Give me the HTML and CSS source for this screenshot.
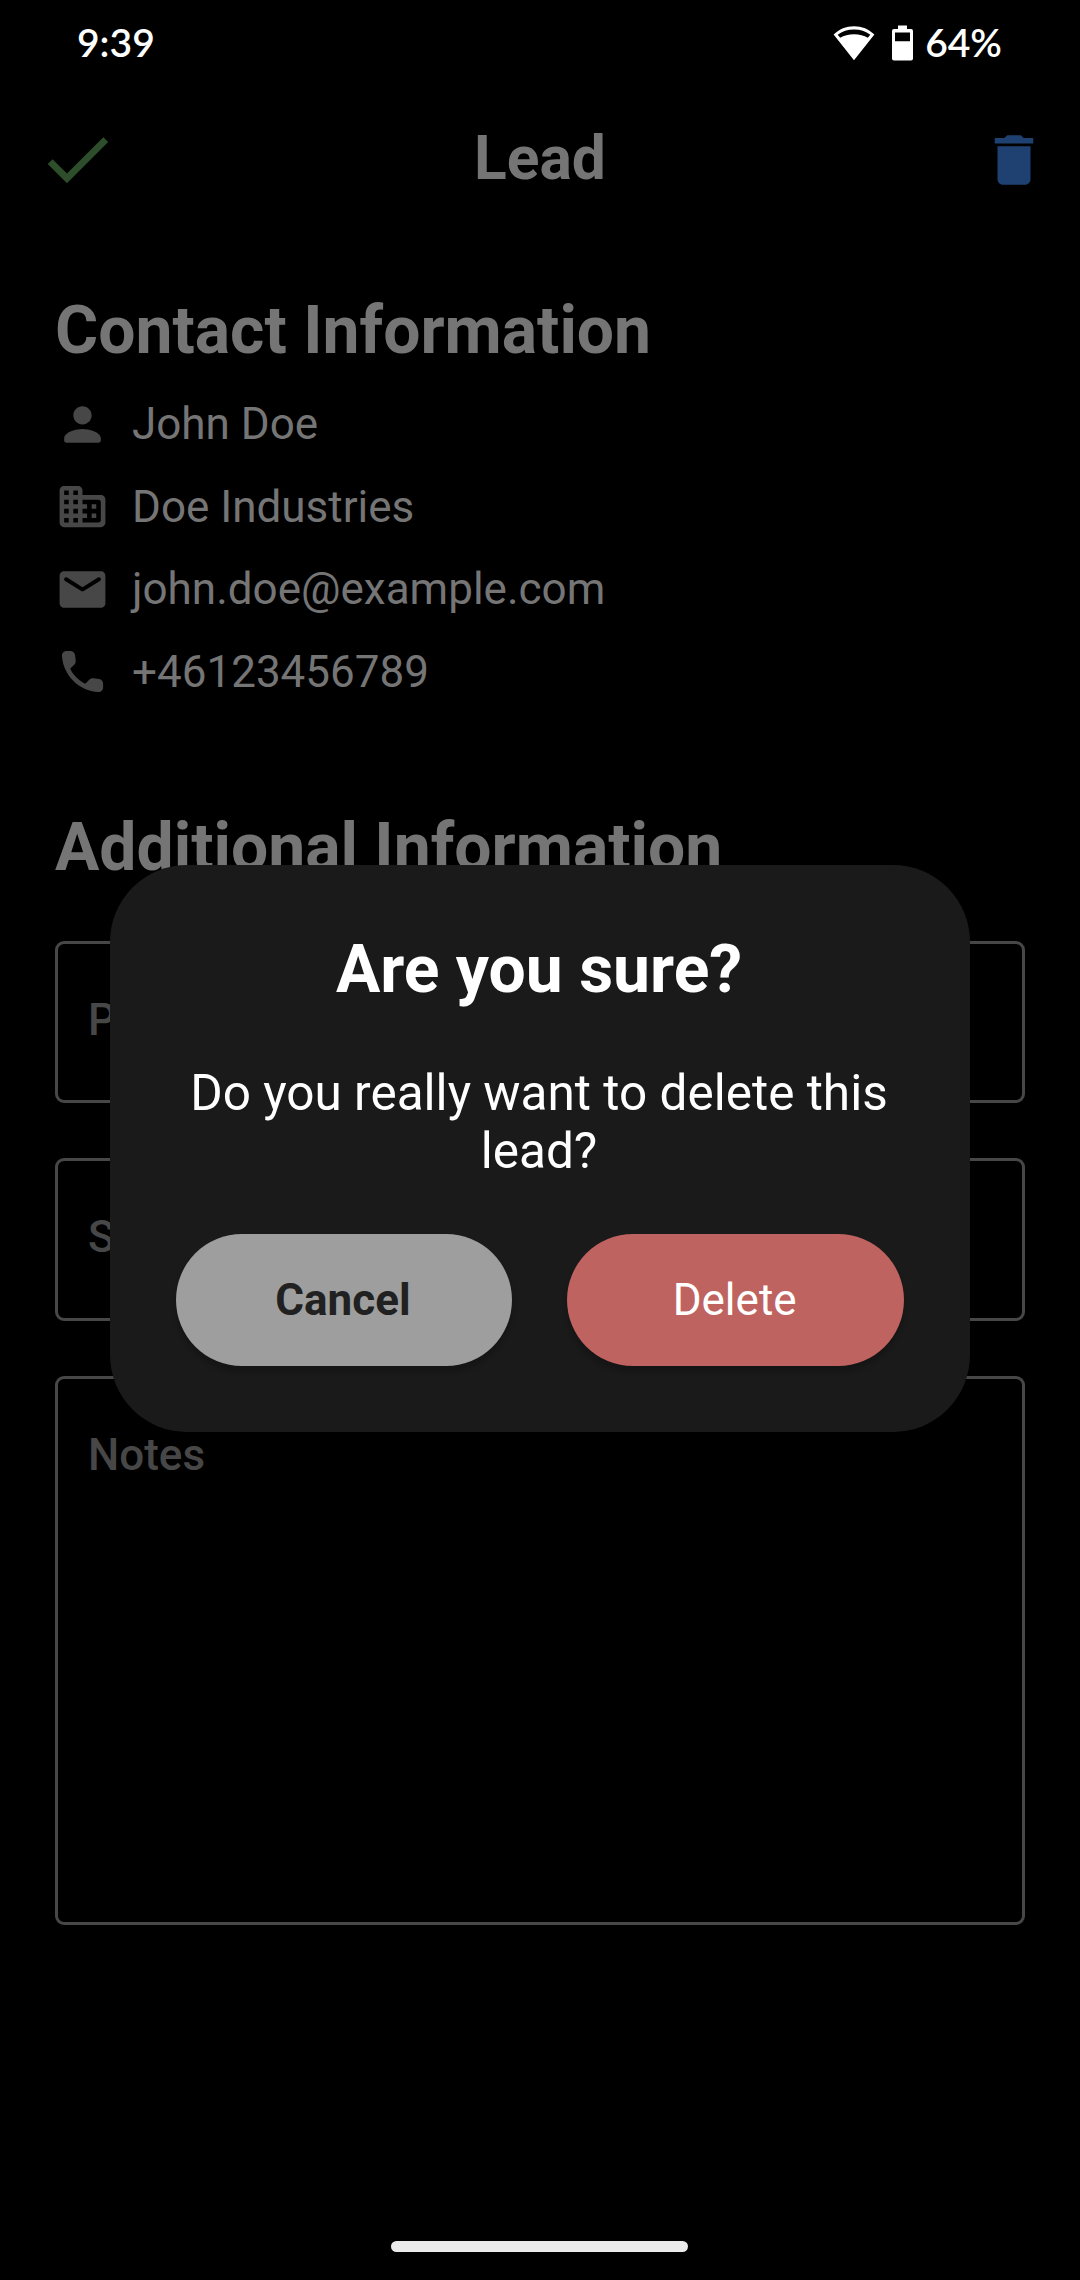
FILE: index.html
```html
<!DOCTYPE html>
<html lang="en">
<head>
<meta charset="utf-8">
<title>Lead</title>
<link rel="stylesheet" href="styles.css">
</head>
<body>
<div class="screen">
  <header class="status">
    <span class="status-time">9:39</span>
    <div class="status-right">
      <svg class="wifi" width="42" height="36" viewBox="0 0 42 36"><path fill="#fff" fill-rule="evenodd" d="M21 35.2L.6 9.6C6.300 4 13 1.200 21 1.200S35.700 4 41.400 9.600zM7.200 12.800C11 10.700 15.600 9.300 21 9.300S31 10.700 34.800 12.800L37.300 9.700C32.600 6.200 27.500 4.400 21 4.400S9.400 6.200 4.700 9.700z"/></svg>
      <svg class="battery" width="21" height="36" viewBox="0 0 21 36"><path fill="#fff" fill-rule="evenodd" d="M6 .5h9V4h4a2 2 0 0 1 2 2v27.500a2 2 0 0 1-2 2H2a2 2 0 0 1-2-2V6a2 2 0 0 1 2-2h4zM3 7.500v8.700h15V7.500z"/></svg>
      <span class="status-level">64%</span>
    </div>
  </header>

  <nav class="appbar">
    <svg class="icon-check" viewBox="0 0 24 24"><path d="M9 16.170L4.830 12l-1.420 1.410L9 19 21 7l-1.410-1.410z"/></svg>
    <h1 class="appbar-title">Lead</h1>
    <svg class="icon-trash" viewBox="0 0 24 24"><path d="M6 19c0 1.100.9 2 2 2h8c1.100 0 2-.9 2-2V7H6v12zM19 4h-3.500l-1-1h-5l-1 1H5v2h14V4z"/></svg>
  </nav>

  <main class="content">
    <h2 class="section-title">Contact Information</h2>
    <ul class="contacts">
      <li class="contact"><svg class="icon" viewBox="0 0 24 24"><path d="M12 12c2.210 0 4-1.790 4-4s-1.790-4-4-4-4 1.790-4 4 1.790 4 4 4zm0 2c-2.670 0-8 1.340-8 4v1c0 .55.45 1 1 1h14c.55 0 1-.45 1-1v-1c0-2.660-5.330-4-8-4z"/></svg><span>John Doe</span></li>
      <li class="contact"><svg class="icon" viewBox="0 0 24 24"><path fill-rule="evenodd" d="M4 3h6c1.100 0 2 .9 2 2v2h8c1.100 0 2 .9 2 2v10c0 1.100-.9 2-2 2H4c-1.100 0-2-.9-2-2V5c0-1.100.9-2 2-2zM4 5v2h2V5zM8 5v2h2V5zM4 9v2h2V9zM8 9v2h2V9zM4 13v2h2v-2zM8 13v2h2v-2zM4 17v2h2v-2zM8 17v2h2v-2zM20 18V10c0-.55-.45-1-1-1h-7v2h2v2h-2v2h2v2h-2v2h7c.55 0 1-.45 1-1zM16 11v2h2v-2zM16 15v2h2v-2z"/></svg><span>Doe Industries</span></li>
      <li class="contact"><svg class="icon" viewBox="0 0 24 24"><path d="M20 4H4c-1.100 0-2 .9-2 2v12c0 1.100.9 2 2 2h16c1.100 0 2-.9 2-2V6c0-1.100-.9-2-2-2zm-.4 4.250l-7.070 4.420c-.32.2-.74.2-1.060 0L4.400 8.250a.85.85 0 1 1 .9-1.440L12 11l6.700-4.190a.85.85 0 1 1 .9 1.440z"/></svg><span>john.doe@example.com</span></li>
      <li class="contact"><svg class="icon" viewBox="0 0 24 24"><path d="M19.230 15.260l-2.540-.29c-.61-.07-1.210.14-1.640.57l-1.840 1.840c-2.830-1.440-5.150-3.750-6.590-6.590l1.850-1.850c.43-.43.64-1.030.57-1.640l-.29-2.520c-.12-1.010-.97-1.770-1.990-1.770H5.030c-1.130 0-2.070.94-2 2.070.53 8.540 7.360 15.360 15.890 15.890 1.130.07 2.070-.87 2.070-2v-1.730c.01-1.010-.75-1.860-1.760-1.980z"/></svg><span>+46123456789</span></li>
    </ul>

    <h2 class="section-title">Additional Information</h2>
    <div class="fields">
      <div class="field">P</div>
      <div class="field">S</div>
      <div class="field field-notes">Notes</div>
    </div>
  </main>

  <div class="home-bar"></div>

  <div class="overlay">
    <section class="dialog" role="dialog">
      <h2 class="dialog-title">Are you sure?</h2>
      <p class="dialog-text">Do you really want to delete this lead?</p>
      <div class="dialog-actions">
        <button class="btn btn-cancel">Cancel</button>
        <button class="btn btn-delete">Delete</button>
      </div>
    </section>
  </div>
</div>
</body>
</html>
```
FILE: styles.css
```css
* { box-sizing: border-box; }
body, h1, h2, p, ul { margin: 0; padding: 0; }
body { background: #000; }

.screen {
  position: relative;
  display: flex;
  flex-direction: column;
  width: 1080px;
  height: 2280px;
  overflow: hidden;
  background: #000;
  color: #757575;
  font-family: Roboto, "Liberation Sans", sans-serif;
  font-size: 44px;
}

.status {
  display: flex;
  justify-content: space-between;
  align-items: center;
  height: 86px;
  padding: 0 78px 0 77px;
  color: #fff;
  font-family: Lato, sans-serif;
  font-weight: 600;
  font-size: 39px;
  line-height: 46px;
}
.status-time, .status-level { padding-bottom: 2px; }
.status-right { display: flex; align-items: center; }
.battery { margin: 0 12px 0 17px; }

.appbar {
  display: grid;
  grid-template-columns: 1fr auto 1fr;
  align-items: center;
  height: 147px;
  padding: 0 33px;
}
.appbar-title {
  padding-bottom: 3px;
  font-size: 60.5px;
  line-height: 71px;
}
.icon-check { width: 82.5px; height: 82.5px; margin-left: 3px; fill: #2e4d2a; }
.icon-trash { width: 66px; height: 66px; justify-self: end; fill: #1f4172; }

.content { padding: 59px 55px 0; }
.section-title { font-size: 66px; line-height: 77px; }
.contacts { list-style: none; padding: 14px 0 96px; }
.contact {
  display: flex;
  align-items: center;
  gap: 22px;
  height: 82.5px;
  line-height: 52px;
}
.icon { width: 55px; height: 55px; fill: #474747; }

.fields {
  display: flex;
  flex-direction: column;
  gap: 55px;
  padding-top: 55px;
}
.field {
  height: 162.4px;
  padding: 50px 30px;
  border: 3px solid #474747;
  border-radius: 9px;
  color: #474747;
  font-weight: 500;
  line-height: 52px;
}
.field-notes { height: 549px; }

.home-bar {
  width: 297px;
  height: 11px;
  margin: auto 392px 28px 391px;
  border-radius: 6px;
  background: #ebebeb;
}

.overlay {
  position: absolute;
  inset: 0;
  display: flex;
  justify-content: center;
  align-items: flex-start;
  padding-top: 865px;
}
.dialog {
  width: 860px;
  height: 567px;
  padding: 66px;
  border-radius: 77px;
  background: #1a1a1a;
  color: #fff;
  text-align: center;
}
.dialog-title { padding-right: 2px; font-size: 66px; line-height: 77px; }
.dialog-text { margin-top: 56px; padding-right: 2px; font-size: 49.5px; line-height: 58px; }
.dialog-actions { display: flex; gap: 55px; margin: 54px 0 0 -0.5px; }
.btn {
  flex: 1;
  height: 132px;
  padding: 0 2px 0 0;
  border: 0;
  border-radius: 66px;
  font-family: inherit;
  font-size: 44px;
  box-shadow: 0 6px 5px rgba(0, 0, 0, 0.2);
}
.btn-cancel { background: #9e9e9e; color: #212121; font-weight: 700; }
.btn-delete { background: #bf6360; color: #fff; font-weight: 400; }
```
